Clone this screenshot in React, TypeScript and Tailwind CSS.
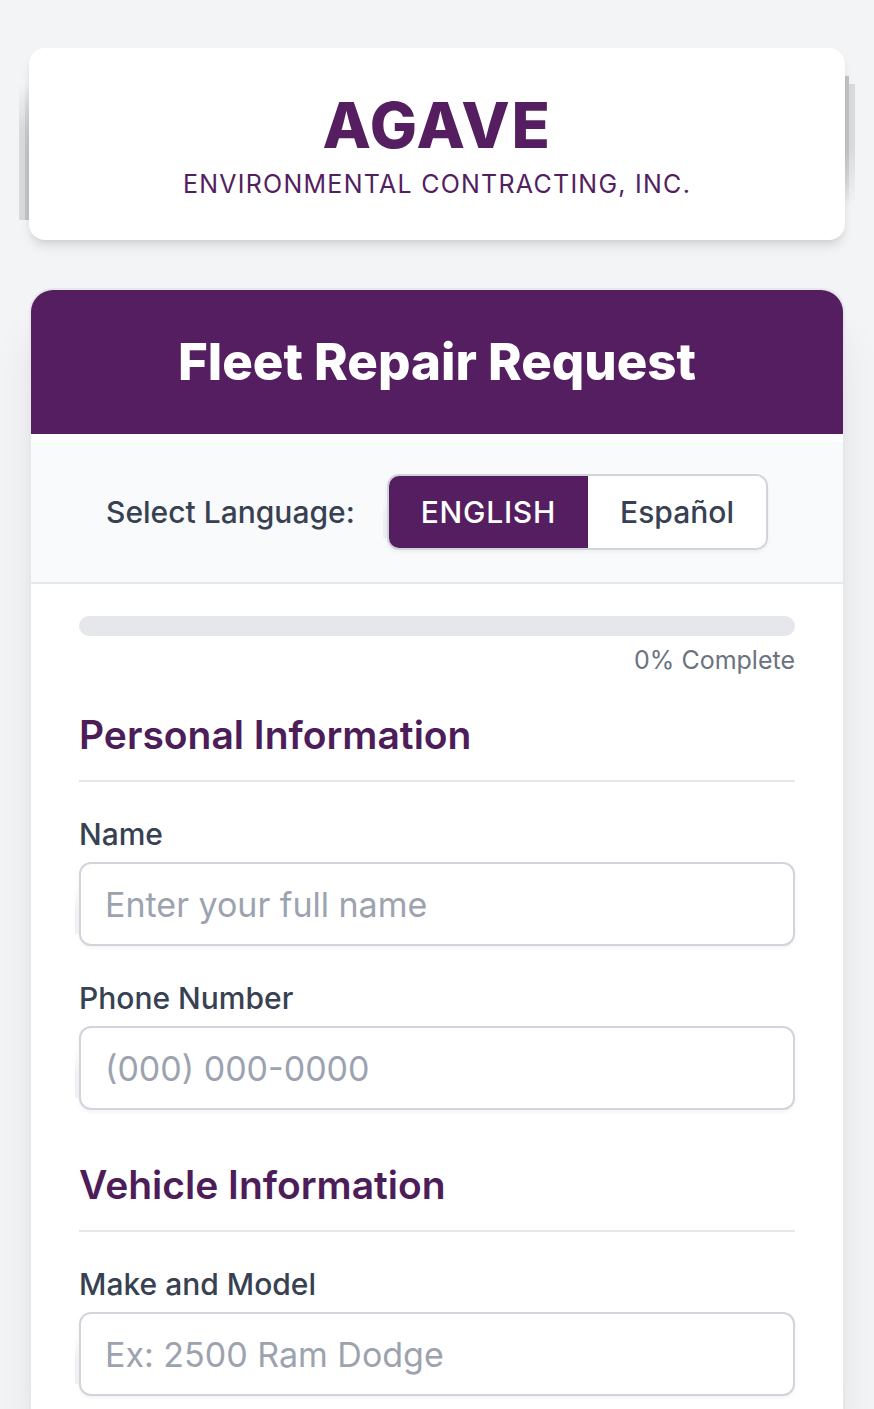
import { useState } from "react";

type Field = { id: string; label: string; placeholder: string; type: string };

const personal: Field[] = [
  { id: "name", label: "Name", placeholder: "Enter your full name", type: "text" },
  { id: "phone", label: "Phone Number", placeholder: "(000) 000-0000", type: "tel" },
];

const vehicle: Field[] = [
  { id: "model", label: "Make and Model", placeholder: "Ex: 2500 Ram Dodge", type: "text" },
];

function EdgeShade() {
  return (
    <div className="absolute top-6 bottom-3 -left-1 w-1 bg-linear-to-b from-transparent to-[#f0f1f2] to-50%" />
  );
}

function TextField({ id, label, placeholder, type }: Field) {
  return (
    <div className="flex flex-col gap-2">
      <label htmlFor={id} className="text-[30px] leading-10 font-medium text-[#374151]">
        {label}
      </label>
      <div className="relative">
        <EdgeShade />
        <input
          id={id}
          type={type}
          placeholder={placeholder}
          className="block h-[84px] w-full rounded-xl border-2 border-[#d1d5db] bg-white px-6 text-[34px] text-[#374151] shadow-[0_2px_4px_rgba(0,0,0,0.05)] placeholder:text-[#9ca3af] focus:border-[#541e60] focus:outline-none"
        />
      </div>
    </div>
  );
}

function Section({ title, fields }: { title: string; fields: Field[] }) {
  return (
    <section className="flex flex-col gap-8">
      <h2 className="border-b-2 border-gray-200 pb-[18px] text-[39px] leading-[54px] font-semibold text-[#4d1d59]">
        {title}
      </h2>
      {fields.map((field) => (
        <TextField key={field.id} {...field} />
      ))}
    </section>
  );
}

export default function App() {
  const [language, setLanguage] = useState("en");
  const progress = 0;
  const active = "bg-[#541e60] text-white";
  const idle = "bg-white text-[#374151]";

  return (
    <div className="flex min-h-screen flex-col gap-12 overflow-hidden bg-gray-100 px-[29px] pt-12 font-['Inter',sans-serif]">
      <header className="relative">
        <div className="absolute top-9 bottom-5 -left-[10px] w-[10px] bg-linear-to-b from-transparent via-[#d9dadb] via-35% to-[#d9dadb]" />
        <div className="absolute top-9 bottom-5 -left-1 w-1 bg-linear-to-b from-transparent via-[#c4c5c5] via-50% to-[#c4c5c5]" />
        <div className="absolute top-9 bottom-5 -right-[10px] w-[10px] bg-linear-to-b from-[#d9dadb] from-45% to-transparent to-90%" />
        <div className="absolute top-7 bottom-5 -right-1 w-1 bg-linear-to-b from-[#c4c5c5] from-50% to-transparent to-90%" />
        <div className="relative rounded-2xl bg-white px-12 pt-[45px] pb-10 text-center text-[#541e60] shadow-[0_8px_12px_-2px_rgba(0,0,0,0.1),0_4px_8px_-4px_rgba(0,0,0,0.1)]">
          <h1 className="text-[63px] leading-[64px] font-extrabold tracking-wide">AGAVE</h1>
          <p className="mt-[11px] text-[25px] leading-8 tracking-wider uppercase">
            Environmental Contracting, Inc.
          </p>
        </div>
      </header>

      <main className="flex-1 overflow-hidden rounded-t-3xl border-2 border-b-0 border-gray-200 bg-white shadow-[0_40px_50px_-10px_rgba(0,0,0,0.1),0_16px_20px_-12px_rgba(0,0,0,0.08)]">
        <div className="bg-[#541e60] px-12 py-11 text-center">
          <h2 className="text-[51px] leading-[56px] font-extrabold text-white">Fleet Repair Request</h2>
        </div>

        <div className="mt-2 flex flex-wrap items-center justify-center gap-8 border-b-2 border-gray-200 bg-gray-50 py-8">
          <span id="language-label" className="text-[30px] leading-10 font-medium text-[#374151]">
            Select Language:
          </span>
          <div className="relative">
            <EdgeShade />
            <div
              role="group"
              aria-labelledby="language-label"
              className="relative flex overflow-hidden rounded-xl border-2 border-[#d1d5db] text-[30px] leading-10 font-medium shadow-[0_2px_4px_rgba(0,0,0,0.05)]"
            >
              <button
                type="button"
                aria-pressed={language === "en"}
                onClick={() => setLanguage("en")}
                className={`px-8 py-4 tracking-wide uppercase ${language === "en" ? active : idle}`}
              >
                English
              </button>
              <button
                type="button"
                aria-pressed={language === "es"}
                onClick={() => setLanguage("es")}
                className={`px-8 py-4 ${language === "es" ? active : idle}`}
              >
                Español
              </button>
            </div>
          </div>
        </div>

        <form className="px-12 pt-8 pb-3">
          <div
            role="progressbar"
            aria-label="Form progress"
            aria-valuenow={progress}
            className="h-5 overflow-hidden rounded-full bg-gray-200"
          >
            <div className="h-full bg-[#541e60]" style={{ width: `${progress}%` }} />
          </div>
          <p className="mt-2 text-right text-[25px] leading-8 text-[#6b7280]">{progress}% Complete</p>
          <div className="mt-8 flex flex-col gap-12">
            <Section title="Personal Information" fields={personal} />
            <Section title="Vehicle Information" fields={vehicle} />
          </div>
        </form>
      </main>
    </div>
  );
}
